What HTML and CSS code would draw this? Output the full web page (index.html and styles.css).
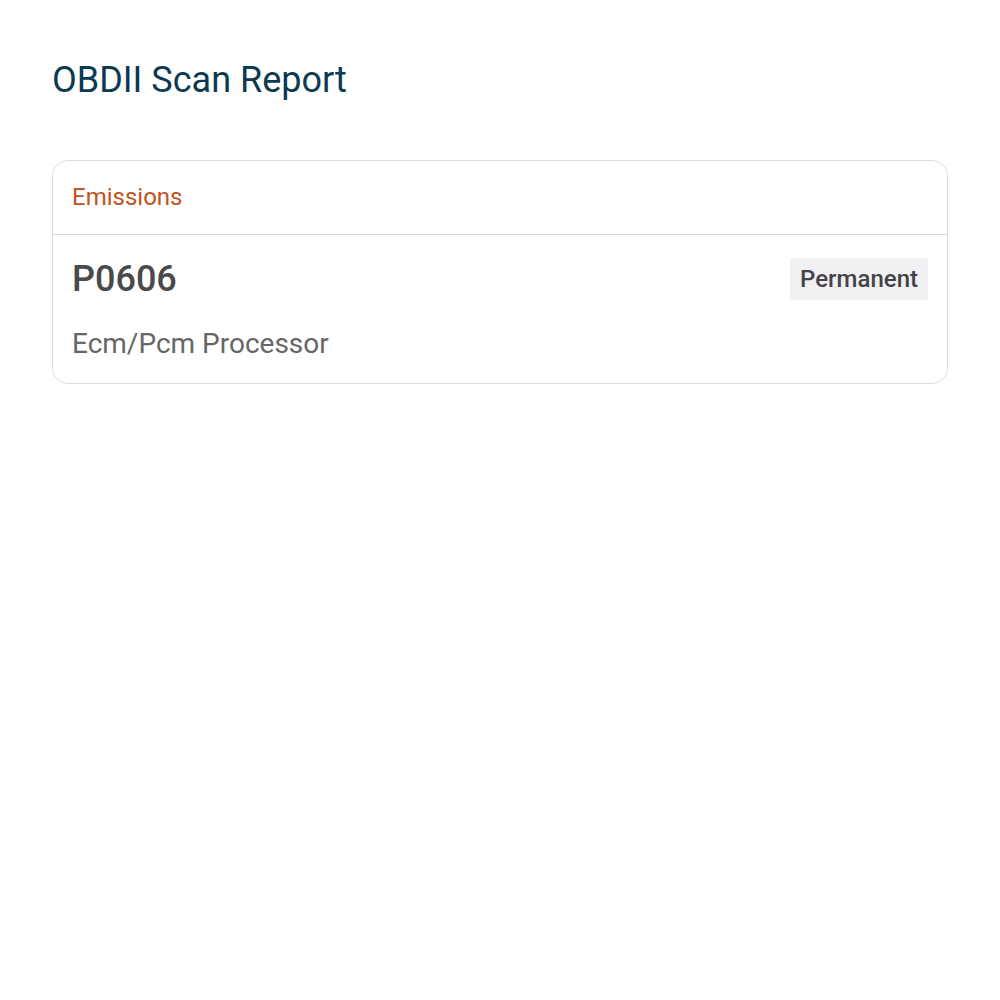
FILE: index.html
```html
<!DOCTYPE html>
<html lang="en">
<head>
  <meta charset="UTF-8" />
  <meta name="viewport" content="width=device-width, initial-scale=1.0"/>
  <title>OBDII Scan Report</title>
  <link rel="stylesheet" href="styles.css">
</head>
<body>

  <h1 class="title">OBDII Scan Report</h1>

  <div class="section">
    <div class="section-header">Emissions</div>
    <div class="code-item">
      <div class="code-row">
        <span class="code">P0606</span>
        <span class="badge">Permanent</span>
      </div>
      <div class="code-desc">Ecm/Pcm Processor</div>
    </div>
  </div>

</body>
</html>
```

FILE: styles.css
```css
body {
  font-family: Roboto, 'Noto Sans', sans-serif;
  background: #ffffff;
  margin: 0;
  padding: 52px 52px;
}

.title {
  font-size: 36px;
  font-weight: 400;
  color: #0b3a52;
  margin: 4px 0 56px;
  line-height: 48px;
}

.section {
  border: 1px solid #dcdcdc;
  border-radius: 16px;
  overflow: hidden;
}

.section-header {
  padding: 22px 19px;
  font-size: 24px;
  line-height: 29px;
  color: #c2531b;
  border-bottom: 1px solid #d6d6d6;
}

.code-item {
  padding: 23px 19px 22px;
}

.code-row {
  display: flex;
  justify-content: space-between;
  align-items: center;
}

.code {
  font-size: 36px;
  font-weight: 500;
  color: #4a4a4a;
  line-height: 42px;
}

.badge {
  background: #f1f1f4;
  color: #444448;
  font-size: 24px;
  font-weight: 500;
  padding: 7px 10px;
  line-height: 28px;
}

.code-desc {
  margin-top: 27px;
  font-size: 28px;
  line-height: 34px;
  color: #666666;
}
```
